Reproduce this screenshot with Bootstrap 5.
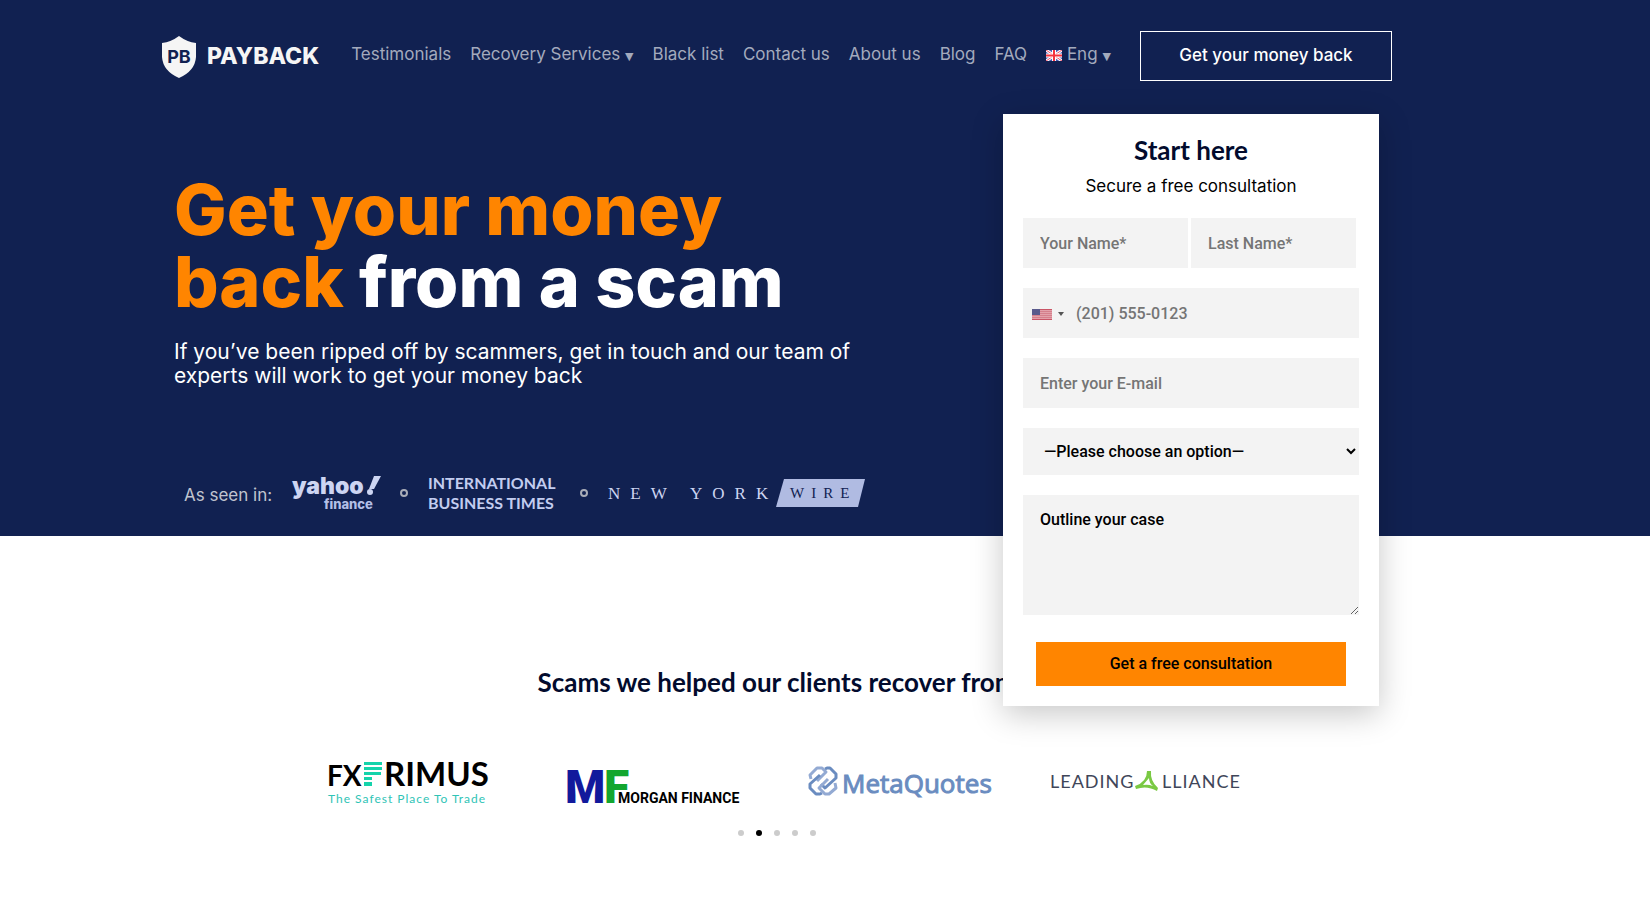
<!DOCTYPE html>
<html lang="en">
<head>
<meta charset="utf-8">
<meta name="viewport" content="width=device-width, initial-scale=1">
<title>Payback</title>
<link href="https://cdn.jsdelivr.net/npm/bootstrap@5.3.0/dist/css/bootstrap.min.css" rel="stylesheet">
<style>
  :root { --navy: #112151; --orange: #ff8500; --ink: #020b2d; }
  body { font-family: Inter, "Open Sans", sans-serif; font-size: 17px; color: #000; background: #fff; }
  .page-wrap { max-width: 1230px; }
  @media (min-width: 1400px) { .page-band { padding-right: 96px; } }
  .hero { background: var(--navy); color: #fff; }
  .topbar { height: 114px; padding-bottom: 2px; }
  .brand svg, .press svg, .logos svg { display: block; overflow: visible; }
  .topnav { gap: 19px; padding-bottom: 1px; margin-right: 4px; }
  .topnav a { color: #a3aabd; text-decoration: none; line-height: 24px; white-space: nowrap; }
  .topnav .tri { font-family: "DejaVu Sans", sans-serif; font-size: 11px; }
  .btn-cta { width: 252px; height: 50px; border: 1px solid #fff; border-radius: 0; color: #fff; font-weight: 500; font-size: 17px; }
  .btn-cta:hover { background: #fff; color: var(--navy); }
  .hero-copy { padding-left: 12px; padding-top: 60px; width: 720px; }
  .hero-copy h1 { font-weight: 800; font-size: 70px; line-height: 72px; margin: 0 0 22px; }
  .hero-copy h1 span { color: var(--orange); }
  .hero-copy p { font-size: 21px; line-height: 24px; margin: 0; }
  .press { padding: 87px 0 24px 10px; gap: 20px; color: #c0c4cf; }
  .press-label { padding-top: 6px; }
  .ring { width: 8px; height: 8px; border: 2px solid #a9adb8; border-radius: 50%; }
  .form-card { width: 376px; margin: 0 13px -170px 0; padding: 20px; background: #fff; color: #000; box-shadow: 0 8px 30px rgba(0,0,0,.22); }
  .form-card h2 { font-family: Lato, sans-serif; font-weight: 700; font-size: 26px; line-height: 32px; color: var(--ink); margin: 0 0 8px; }
  .form-card .sub { line-height: 24px; margin: 0 0 20px; }
  .form-card .form-control, .form-card .form-pick { font-family: Roboto, sans-serif; font-weight: 500; font-size: 16px; color: #000; background-color: #f3f3f3; border: 0; border-radius: 0; padding: 0 17px; height: 50px; }
  .form-card .form-control::placeholder { color: #757575; }
  .form-card .names { gap: 3px; margin-right: 3px; }
  .form-card .phone { background: #f3f3f3; }
  .form-card .phone .form-control { padding-left: 8px; }
  .form-card .dial { border: 0; background: none; padding: 2px 4px 0 9px; gap: 6px; }
  .form-card .form-pick { display: block; width: 100%; height: 47px; }
  .form-card textarea.form-control { height: 120px; padding-top: 13px; resize: vertical; }
  .form-card textarea.form-control::placeholder { color: #000; }
  .form-stack { gap: 20px; }
  .btn-send { display: block; width: calc(100% - 26px); height: 44px; margin: 27px auto 0; border: 0; background: var(--orange); color: #000; font-family: Roboto, sans-serif; font-weight: 500; font-size: 16px; }
  .recover { padding-top: 130px; }
  .recover h2 { font-family: Lato, sans-serif; font-weight: 700; font-size: 26px; line-height: 32px; color: var(--ink); margin: 0 0 50px; }
  .logos { max-width: 982px; }
  .pips { gap: 12px; padding-top: 18px; }
  .pips button { width: 6px; height: 6px; border: 0; padding: 0; border-radius: 50%; background: #ccc; }
  .pips button.on { background: #000; }
</style>
</head>
<body>
<section class="hero page-band">
  <div class="page-wrap mx-auto">
    <header class="topbar d-flex align-items-center justify-content-between">
      <a class="brand" href="#" aria-label="Payback">
        <svg width="164" height="44" viewBox="0 0 164 44">
          <path d="M17 2 Q25 8 34 9 V23 Q33 37 17 44 Q1 37 0 23 V9 Q9 8 17 2Z" fill="#f5f5f5"/>
          <text x="17" y="29" text-anchor="middle" font-family="Inter, sans-serif" font-weight="700" font-size="18" fill="#112151">PB</text>
          <text x="45" y="30" font-family="Inter, sans-serif" font-weight="800" font-size="23" fill="#f5f5f5">PAYBACK</text>
        </svg>
      </a>
      <nav class="topnav d-flex">
        <a href="#">Testimonials</a>
        <a href="#">Recovery Services <span class="tri">▼</span></a>
        <a href="#">Black list</a>
        <a href="#">Contact us</a>
        <a href="#">About us</a>
        <a href="#">Blog</a>
        <a href="#">FAQ</a>
        <a href="#"><svg width="16" height="11" viewBox="0 0 16 11" aria-hidden="true"><rect width="16" height="11" fill="#4a5cb0"/><path d="M0 0L16 11M16 0L0 11" stroke="#fff" stroke-width="3"/><path d="M0 0L16 11M16 0L0 11" stroke="#f0506a" stroke-width="1"/><path d="M8 0V11M0 5.500H16" stroke="#fff" stroke-width="4"/><path d="M8 0V11M0 5.500H16" stroke="#f5333f" stroke-width="2"/></svg> Eng <span class="tri">▼</span></a>
      </nav>
      <button class="btn btn-cta" type="button">Get your money back</button>
    </header>
    <div class="d-flex justify-content-between align-items-start">
      <div class="hero-copy">
        <h1><span>Get your money<br>back</span> from a scam</h1>
        <p>If you’ve been ripped off by scammers, get in touch and our team of<br>experts will work to get your money back</p>
        <div class="press d-flex align-items-center">
          <span class="press-label">As seen in:</span>
          <svg width="88" height="36" viewBox="0 0 88 36" role="img" aria-label="yahoo! finance" font-family="Inter, sans-serif" fill="#cdd5f2">
            <text x="0" y="19" font-weight="900" font-size="23">yahoo</text>
            <path d="M82 1H89L82 14H77Z"/><circle cx="78" cy="17" r="3"/>
            <text x="32" y="34" font-weight="800" font-size="13" fill="#b3bfe6">finance</text>
          </svg>
          <span class="ring"></span>
          <svg width="132" height="36" viewBox="0 0 132 36" role="img" aria-label="International Business Times" font-family="Lato, sans-serif" font-weight="700" font-size="16" fill="#c3cdf0">
            <text x="0" y="14">INTERNATIONAL</text>
            <text x="0" y="34">BUSINESS TIMES</text>
          </svg>
          <span class="ring"></span>
          <svg width="258" height="30" viewBox="0 0 258 30" role="img" aria-label="New York Wire" font-family="Liberation Serif, serif">
            <text x="0" y="21" font-size="17" letter-spacing="10" fill="#cdd5f2">NEW YORK</text>
            <path d="M176 1H257L250 29H168Z" fill="#b0bbe2"/>
            <text x="182" y="20" font-size="15" letter-spacing="7" fill="#112151">WIRE</text>
          </svg>
        </div>
      </div>
      <form class="form-card position-relative z-1 flex-shrink-0" onsubmit="return false">
        <h2 class="text-center">Start here</h2>
        <p class="sub text-center">Secure a free consultation</p>
        <div class="form-stack d-flex flex-column">
          <div class="names d-flex">
            <input class="form-control" type="text" placeholder="Your Name*" aria-label="Your Name">
            <input class="form-control" type="text" placeholder="Last Name*" aria-label="Last Name">
          </div>
          <div class="phone d-flex">
            <button class="dial d-flex align-items-center" type="button" aria-label="Country code">
              <svg width="20" height="11" viewBox="0 0 20 11"><rect width="20" height="11" fill="#e3a1aa"/><path d="M0 .5H20M0 10.500H20" stroke="#c95566"/><path d="M0 2.500H20M0 4.500H20M0 6.500H20M0 8.500H20" stroke="#d5808c"/><rect width="8" height="6" fill="#5a5a8c"/></svg>
              <svg width="6" height="4" viewBox="0 0 6 4"><path d="M0 0H6L3 4Z" fill="#555"/></svg>
            </button>
            <input class="form-control" type="tel" placeholder="(201) 555-0123" aria-label="Phone">
          </div>
          <input class="form-control" type="email" placeholder="Enter your E-mail" aria-label="E-mail">
          <select class="form-pick" aria-label="Type of case"><option>—Please choose an option—</option></select>
          <textarea class="form-control" placeholder="Outline your case" aria-label="Outline your case"></textarea>
        </div>
        <button class="btn-send" type="submit">Get a free consultation</button>
      </form>
    </div>
  </div>
</section>
<section class="recover page-band">
  <div class="page-wrap mx-auto">
    <h2 class="text-center">Scams we helped our clients recover from</h2>
    <div class="logos row g-0 mx-auto align-items-center">
      <div class="col d-flex justify-content-center">
        <svg width="164" height="64" viewBox="0 0 164 64" role="img" aria-label="FXPrimus" font-family="Lato, sans-serif">
          <text x="0" y="38" font-weight="700" font-size="28">FX</text>
          <g fill="#14d3ab"><rect x="37" y="14" width="18" height="3"/><rect x="37" y="19" width="18" height="3"/><rect x="37" y="24" width="17" height="3"/><rect x="37" y="29" width="8" height="3"/><rect x="37" y="34" width="8" height="4"/></g>
          <text x="57" y="38" font-weight="700" font-size="33">RIMUS</text>
          <text x="1" y="55" font-size="12" letter-spacing="1" fill="#2fc4b6">The Safest Place To Trade</text>
        </svg>
      </div>
      <div class="col d-flex justify-content-center">
        <svg width="174" height="64" viewBox="0 0 174 64" role="img" aria-label="Morgan Finance" font-family="Roboto, sans-serif" font-weight="700">
          <text x="-2" y="55" font-size="46" font-weight="900" fill="#12199c">M</text>
          <text x="37" y="55" font-size="46" font-weight="900" fill="#12a62f">F</text>
          <text x="51" y="55" font-size="14">MORGAN FINANCE</text>
        </svg>
      </div>
      <div class="col d-flex justify-content-center">
        <svg width="184" height="64" viewBox="0 0 184 64" role="img" aria-label="MetaQuotes" font-family="Open Sans, sans-serif">
          <g transform="translate(0 9)" fill="none" stroke-width="3" stroke-linejoin="round"><path d="M3 22L2 18L9 11H14L18 15L9 24" stroke="#93aad3"/><path d="M17 12L19 11H22L28 17V21L17 31L13 27" stroke="#6a8cc0"/><path d="M12 18L2 27V31L8 37H12L14 36" stroke="#6a8cc0"/><path d="M27 26L28 31L21 37H17L11 31L20 22" stroke="#93aad3"/></g>
          <text x="34" y="45" font-weight="500" font-size="26" fill="#6a8cc0" stroke="#6a8cc0" stroke-width="1">MetaQuotes</text>
        </svg>
      </div>
      <div class="col d-flex justify-content-center">
        <svg width="192" height="64" viewBox="0 0 192 64" role="img" aria-label="Leading Alliance" font-family="Lato, sans-serif" font-size="18" letter-spacing="1" fill="#3f4659">
          <text x="1" y="40">LEADING</text>
          <path transform="translate(0 3)" d="M98 20H102Q101 30 109 37L108 40Q98 34 87 38L86 35Q98 31 98 20ZM100 27L94 34Q99 33 104 35Q100 32 100 27Z" fill="#7ac943" fill-rule="evenodd"/>
          <text x="113" y="40">LLIANCE</text>
        </svg>
      </div>
    </div>
    <div class="pips d-flex justify-content-center">
      <button type="button" aria-label="Slide 1"></button>
      <button type="button" class="on" aria-label="Slide 2"></button>
      <button type="button" aria-label="Slide 3"></button>
      <button type="button" aria-label="Slide 4"></button>
      <button type="button" aria-label="Slide 5"></button>
    </div>
  </div>
</section>
<script src="https://cdn.jsdelivr.net/npm/bootstrap@5.3.0/dist/js/bootstrap.bundle.min.js"></script>
</body>
</html>
